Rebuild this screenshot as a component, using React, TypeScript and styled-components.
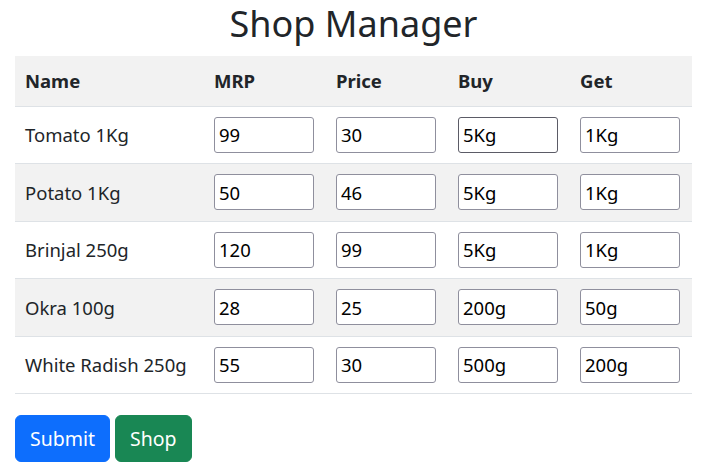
import React, { useState } from 'react'
import styled, { createGlobalStyle } from 'styled-components'

const GlobalStyle = createGlobalStyle`
  html, body {
    margin: 0;
    padding: 0;
    background: #fff;
  }
  body {
    font-family: "Noto Sans", "Open Sans", sans-serif;
    color: #212529;
  }
`

const Page = styled.div`
  padding: 0 15px;
`

const Title = styled.h1`
  margin: 0 0 8px;
  text-align: center;
  font-size: 36px;
  line-height: 48px;
  font-weight: 400;
  color: #212529;
`

const Table = styled.table`
  width: 677px;
  border-collapse: collapse;
  table-layout: fixed;
`

const Row = styled.tr<{ $striped: boolean }>`
  background: ${(p) => (p.$striped ? '#f2f2f2' : '#fff')};
  border-bottom: 1px solid #dee2e6;
`

const HeadCell = styled.th<{ $width: number }>`
  width: ${(p) => p.$width}px;
  height: 50px;
  padding: 0 8px;
  text-align: left;
  font-size: 18.5px;
  font-weight: 700;
  box-sizing: border-box;
  &:first-child {
    padding-left: 10px;
  }
`

const Cell = styled.td`
  height: 57.5px;
  padding: 0 8px;
  font-size: 18.5px;
  box-sizing: border-box;
  &:first-child {
    padding-left: 10px;
  }
`

const Field = styled.input<{ $hover?: boolean }>`
  display: block;
  width: 100px;
  height: 36px;
  box-sizing: border-box;
  padding: 0 4px;
  border: 1px solid ${(p) => (p.$hover ? '#5b5b66' : '#8f8f9d')};
  border-radius: 3px;
  font-family: "Noto Sans", "Open Sans", sans-serif;
  font-size: 18.5px;
  color: #000;
  background: #fff;
`

const Actions = styled.div`
  display: flex;
  gap: 5px;
  margin-top: 21px;
`

const Button = styled.button<{ $tone: 'primary' | 'success' }>`
  height: 47px;
  padding: 0 14px;
  border: 1px solid ${(p) => (p.$tone === 'primary' ? '#0d6efd' : '#198754')};
  border-radius: 6px;
  background: ${(p) => (p.$tone === 'primary' ? '#0d6efd' : '#198754')};
  color: #fff;
  font-family: "Noto Sans", "Open Sans", sans-serif;
  font-size: 19.5px;
  cursor: pointer;
`

interface Item {
  name: string
  mrp: string
  price: string
  buy: string
  get: string
}

const items: Item[] = [
  { name: 'Tomato 1Kg', mrp: '99', price: '30', buy: '5Kg', get: '1Kg' },
  { name: 'Potato 1Kg', mrp: '50', price: '46', buy: '5Kg', get: '1Kg' },
  { name: 'Brinjal 250g', mrp: '120', price: '99', buy: '5Kg', get: '1Kg' },
  { name: 'Okra 100g', mrp: '28', price: '25', buy: '200g', get: '50g' },
  { name: 'White Radish 250g', mrp: '55', price: '30', buy: '500g', get: '200g' },
]

const columns = [
  { label: 'Name', width: 191 },
  { label: 'MRP', width: 122 },
  { label: 'Price', width: 122 },
  { label: 'Buy', width: 122 },
  { label: 'Get', width: 120 },
]

function App() {
  const [rows, setRows] = useState<Item[]>(items)

  const update = (index: number, key: keyof Item, value: string) => {
    setRows(rows.map((r, i) => (i === index ? { ...r, [key]: value } : r)))
  }

  return (
    <>
      <GlobalStyle />
      <Page>
        <Title>Shop Manager</Title>
        <Table>
          <tbody>
            <Row $striped>
              {columns.map((c) => (
                <HeadCell key={c.label} $width={c.width}>{c.label}</HeadCell>
              ))}
            </Row>
            {rows.map((el, index) => (
              <Row key={el.name} $striped={index % 2 === 1}>
                <Cell>{el.name}</Cell>
                <Cell><Field value={el.mrp} onChange={(e) => update(index, 'mrp', e.target.value)} /></Cell>
                <Cell><Field value={el.price} onChange={(e) => update(index, 'price', e.target.value)} /></Cell>
                <Cell><Field $hover={index === 0} value={el.buy} onChange={(e) => update(index, 'buy', e.target.value)} /></Cell>
                <Cell><Field value={el.get} onChange={(e) => update(index, 'get', e.target.value)} /></Cell>
              </Row>
            ))}
          </tbody>
        </Table>
        <Actions>
          <Button $tone="primary">Submit</Button>
          <Button $tone="success">Shop</Button>
        </Actions>
      </Page>
    </>
  )
}

export default App
